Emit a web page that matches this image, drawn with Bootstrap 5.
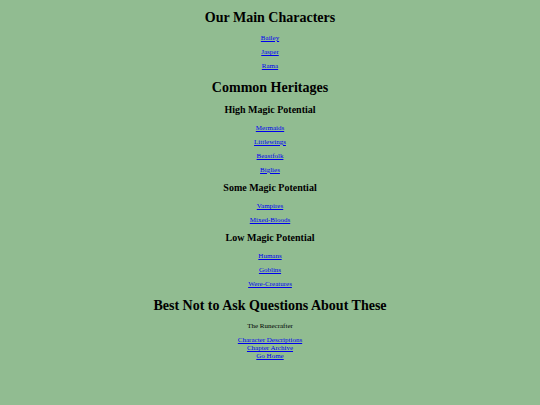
<!DOCTYPE html>
<html lang="en">
<head>
<meta charset="utf-8">
<meta name="viewport" content="width=device-width, initial-scale=1">
<title>Characters</title>
<link href="https://cdn.jsdelivr.net/npm/bootstrap@5.3.0/dist/css/bootstrap.min.css" rel="stylesheet">
<style>
body { background: #91bc91; color: #000; font: 7px/8px "Liberation Serif", "Times New Roman", serif; }
h1, h2 { font-weight: 700; margin: 0; }
h1 { font-size: 14px; line-height: 17px; }
h2 { font-size: 10px; line-height: 12px; }
a { color: #00e; }
a:hover { color: #00a; }
.page { padding: 9px 4px; gap: 9px; }
.group, .links { display: flex; flex-direction: column; align-items: center; }
.group, .races { gap: 8px; }
.links { gap: 6px; }
</style>
</head>
<body>
<main class="page container-fluid d-flex flex-column text-center">
  <section class="group">
    <h1>Our Main Characters</h1>
    <div class="links"><a href="#">Bailey</a><a href="#">Jasper</a><a href="#">Rama</a></div>
  </section>
  <section class="group">
    <h1>Common Heritages</h1>
    <div class="races d-flex flex-column">
      <section class="group">
        <h2>High Magic Potential</h2>
        <div class="links"><a href="#">Mermaids</a><a href="#">Littlewings</a><a href="#">Beastfolk</a><a href="#">Biglies</a></div>
      </section>
      <section class="group">
        <h2>Some Magic Potential</h2>
        <div class="links"><a href="#">Vampires</a><a href="#">Mixed-Bloods</a></div>
      </section>
      <section class="group">
        <h2>Low Magic Potential</h2>
        <div class="links"><a href="#">Humans</a><a href="#">Goblins</a><a href="#">Were-Creatures</a></div>
      </section>
    </div>
  </section>
  <section class="group">
    <h1>Best Not to Ask Questions About These</h1>
    <div class="links">
      <p class="m-0">The Runecrafter</p>
      <nav><a href="#">Character Descriptions</a><br><a href="#">Chapter Archive</a><br><a href="#">Go Home</a></nav>
    </div>
  </section>
</main>
<script src="https://cdn.jsdelivr.net/npm/bootstrap@5.3.0/dist/js/bootstrap.bundle.min.js"></script>
</body>
</html>
